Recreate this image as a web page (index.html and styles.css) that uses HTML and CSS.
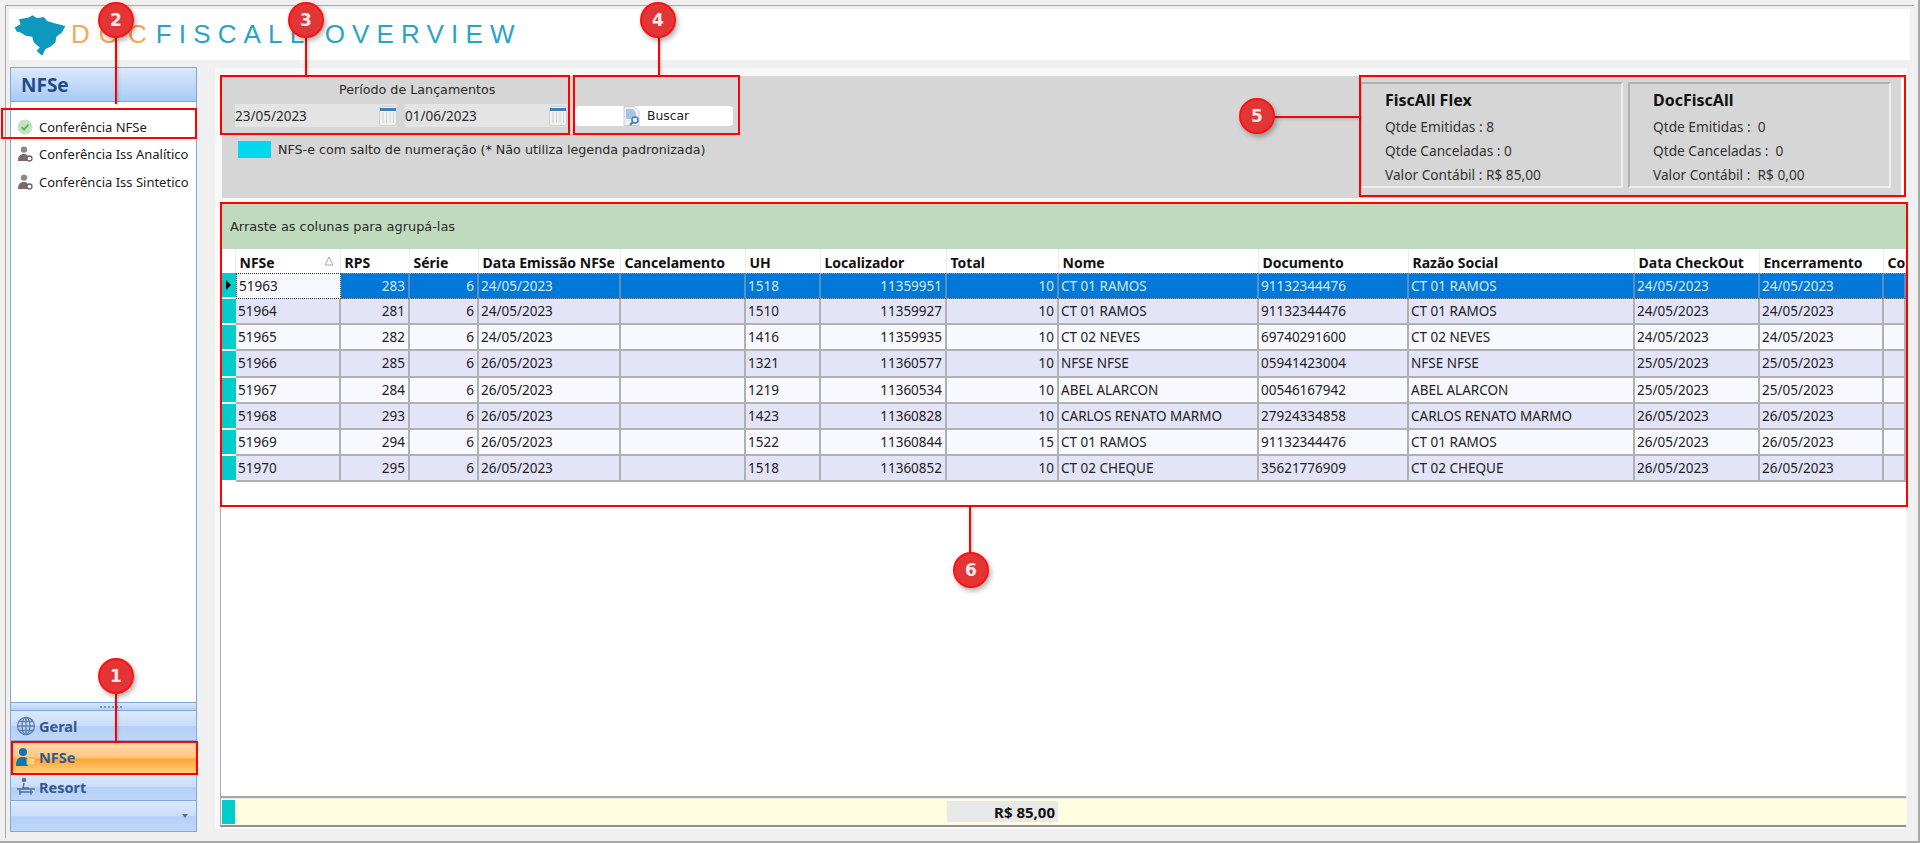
FILE: index.html
```html
<!DOCTYPE html>
<html lang="pt-BR">
<head>
<meta charset="utf-8">
<title>DocFiscall Overview</title>
<link rel="stylesheet" href="styles.css">
</head>
<body>
<div class="app">
  <div class="win">
    <header class="head">
      <svg class="brazil" viewBox="40 40 157 125"><path d="M42 80 60 70 55 55 85 50 95 43 110 52 130 48 140 60 165 68 195 75 185 95 168 108 165 125 150 138 135 145 125 165 108 150 118 140 100 125 95 108 75 105 60 95 48 92Z"/></svg>
      <div class="brand"><span class="brand-a">DOC</span>FISCALL OVERVIEW</div>
    </header>
    <div class="body">
      <aside class="side">
        <div class="side-title">NFSe</div>
        <ul class="side-list">
          <li class="side-item">
            <svg class="ico" viewBox="0 0 16 16"><circle cx="8" cy="8" r="7.5" fill="#c4e3c4"/><path d="M4.5 8.2 7 10.6 11.5 5.6" fill="none" stroke="#4caf50" stroke-width="1.6"/></svg>
            Conferência NFSe</li>
          <li class="side-item">
            <svg class="ico" viewBox="0 0 16 16"><circle cx="7" cy="3.6" r="3.2" fill="#8a8a8a"/><path d="M1 15c0-5 2-7 6-7 1.500 0 3 .5 3.500 1.500V15Z" fill="#6e6e6e"/><path d="M6.500 10h1.500v5H6.500Z" fill="#c9504a"/><circle cx="12.500" cy="12.500" r="2.500" fill="#fff" stroke="#666" stroke-width="1.300"/></svg>
            Conferência Iss Analítico</li>
          <li class="side-item">
            <svg class="ico" viewBox="0 0 16 16"><circle cx="7" cy="3.6" r="3.2" fill="#8a8a8a"/><path d="M1 15c0-5 2-7 6-7 1.500 0 3 .5 3.500 1.500V15Z" fill="#6e6e6e"/><path d="M6.500 10h1.500v5H6.500Z" fill="#c9504a"/><circle cx="12.500" cy="12.500" r="2.500" fill="#fff" stroke="#666" stroke-width="1.300"/></svg>
            Conferência Iss Sintetico</li>
        </ul>
        <div class="grip"><span class="grip-dots"></span></div>
        <div class="nav nav-geral">
          <svg class="nav-ico" viewBox="0 0 20 20" fill="none" stroke="#5f7fae" stroke-width="1.300"><circle cx="10" cy="10" r="8.500"/><ellipse cx="10" cy="10" rx="4" ry="8.500"/><path d="M1.500 10h17M3 5.500h14M3 14.500h14M10 1.500v17"/></svg>
          Geral</div>
        <div class="nav nav-nfse">
          <svg class="nav-ico" viewBox="0 0 20 20"><circle cx="7" cy="5" r="4" fill="#1374b8"/><path d="M0 18c0-6 3-8 7-8 3 0 5 1 5 3v6H0Z" fill="#1374b8"/><rect x="11" y="11" width="8" height="7" rx="1" fill="#fbd27c" stroke="#f2ac45"/></svg>
          NFSe</div>
        <div class="nav nav-resort">
          <svg class="nav-ico" viewBox="0 0 20 20" fill="none" stroke="#566f9b" stroke-width="1.400"><circle cx="8" cy="3" r="1.600" fill="#566f9b"/><path d="M8 6 7 11h6M1 12h18M4 12v6M15 12v6M3 15h14"/></svg>
          Resort</div>
        <div class="side-foot"><span class="caret"></span></div>
      </aside>
      <main class="main">
        <section class="panel">
          <div class="filters">
            <div class="period-title">Período de Lançamentos</div>
            <div class="period-row">
              <div class="date">23/05/2023
                <svg class="cal" viewBox="0 0 18 20"><rect x=".5" y=".5" width="17" height="19" rx="2" fill="#f2f2f2" stroke="#cfcfcf"/><rect x="1" y="2" width="16" height="3" fill="#3f7fb8"/><path d="M4 6v11M7.500 6v11M11 6v11M14.500 6v11" stroke="#d0d0d0"/></svg>
              </div>
              <div class="date">01/06/2023
                <svg class="cal" viewBox="0 0 18 20"><rect x=".5" y=".5" width="17" height="19" rx="2" fill="#f2f2f2" stroke="#cfcfcf"/><rect x="1" y="2" width="16" height="3" fill="#3f7fb8"/><path d="M4 6v11M7.500 6v11M11 6v11M14.500 6v11" stroke="#d0d0d0"/></svg>
              </div>
              <button class="btn" type="button">
                <svg class="btn-ico" viewBox="0 0 18 20"><path d="M1 .5h10l5 5v14H1Z" fill="#eef1f6" stroke="#c8ccd4"/><path d="M3 3h7l3 4v6H3Z" fill="#a9c4e6"/><circle cx="12" cy="14" r="3" fill="#fff" stroke="#2f7fc0" stroke-width="1.500"/><path d="M10 16 7 19" stroke="#2f7fc0" stroke-width="2"/></svg>
                Buscar</button>
            </div>
            <div class="legend"><span class="swatch"></span>NFS-e com salto de numeração (* Não utiliza legenda padronizada)</div>
          </div>
          <div class="stats">
            <div class="stat">
              <h2 class="stat-title">FiscAll Flex</h2>
              <p class="stat-row">Qtde Emitidas : 8</p>
              <p class="stat-row">Qtde Canceladas : 0</p>
              <p class="stat-row">Valor Contábil : R$ 85,00</p>
            </div>
            <div class="stat">
              <h2 class="stat-title">DocFiscAll</h2>
              <p class="stat-row">Qtde Emitidas :&nbsp; 0</p>
              <p class="stat-row">Qtde Canceladas :&nbsp; 0</p>
              <p class="stat-row">Valor Contábil :&nbsp; R$ 0,00</p>
            </div>
          </div>
        </section>
        <section class="grid">
          <div class="group-bar">Arraste as colunas para agrupá-las</div>
          <div class="grid-scroll">
            <table class="tbl">
              <colgroup>
                <col class="c-ind"><col class="c-nfse"><col class="c-rps"><col class="c-serie"><col class="c-emis"><col class="c-canc"><col class="c-uh"><col class="c-loc"><col class="c-total"><col class="c-nome"><col class="c-doc"><col class="c-razao"><col class="c-out"><col class="c-enc"><col class="c-co">
              </colgroup>
              <thead>
                <tr><th class="th-blank"></th><th>NFSe<svg class="sort" viewBox="0 0 10 10"><path d="M5 1 9 9H1Z" fill="none" stroke="#a8a8a8"/></svg></th><th>RPS</th><th>Série</th><th>Data Emissão NFSe</th><th>Cancelamento</th><th>UH</th><th>Localizador</th><th>Total</th><th>Nome</th><th>Documento</th><th>Razão Social</th><th>Data CheckOut</th><th>Encerramento</th><th>Co</th></tr>
              </thead>
              <tbody>
                <tr class="sel"><td class="ind"><span class="arrow"></span></td><td class="focus">51963</td><td class="r">283</td><td class="r">6</td><td>24/05/2023</td><td></td><td>1518</td><td class="r">11359951</td><td class="r">10</td><td>CT 01 RAMOS</td><td>91132344476</td><td>CT 01 RAMOS</td><td>24/05/2023</td><td>24/05/2023</td><td></td></tr>
                <tr class="even"><td class="ind"></td><td>51964</td><td class="r">281</td><td class="r">6</td><td>24/05/2023</td><td></td><td>1510</td><td class="r">11359927</td><td class="r">10</td><td>CT 01 RAMOS</td><td>91132344476</td><td>CT 01 RAMOS</td><td>24/05/2023</td><td>24/05/2023</td><td></td></tr>
                <tr><td class="ind"></td><td>51965</td><td class="r">282</td><td class="r">6</td><td>24/05/2023</td><td></td><td>1416</td><td class="r">11359935</td><td class="r">10</td><td>CT 02 NEVES</td><td>69740291600</td><td>CT 02 NEVES</td><td>24/05/2023</td><td>24/05/2023</td><td></td></tr>
                <tr class="even"><td class="ind"></td><td>51966</td><td class="r">285</td><td class="r">6</td><td>26/05/2023</td><td></td><td>1321</td><td class="r">11360577</td><td class="r">10</td><td>NFSE NFSE</td><td>05941423004</td><td>NFSE NFSE</td><td>25/05/2023</td><td>25/05/2023</td><td></td></tr>
                <tr><td class="ind"></td><td>51967</td><td class="r">284</td><td class="r">6</td><td>26/05/2023</td><td></td><td>1219</td><td class="r">11360534</td><td class="r">10</td><td>ABEL ALARCON</td><td>00546167942</td><td>ABEL ALARCON</td><td>25/05/2023</td><td>25/05/2023</td><td></td></tr>
                <tr class="even"><td class="ind"></td><td>51968</td><td class="r">293</td><td class="r">6</td><td>26/05/2023</td><td></td><td>1423</td><td class="r">11360828</td><td class="r">10</td><td>CARLOS RENATO MARMO</td><td>27924334858</td><td>CARLOS RENATO MARMO</td><td>26/05/2023</td><td>26/05/2023</td><td></td></tr>
                <tr><td class="ind"></td><td>51969</td><td class="r">294</td><td class="r">6</td><td>26/05/2023</td><td></td><td>1522</td><td class="r">11360844</td><td class="r">15</td><td>CT 01 RAMOS</td><td>91132344476</td><td>CT 01 RAMOS</td><td>26/05/2023</td><td>26/05/2023</td><td></td></tr>
                <tr class="even"><td class="ind"></td><td>51970</td><td class="r">295</td><td class="r">6</td><td>26/05/2023</td><td></td><td>1518</td><td class="r">11360852</td><td class="r">10</td><td>CT 02 CHEQUE</td><td>35621776909</td><td>CT 02 CHEQUE</td><td>26/05/2023</td><td>26/05/2023</td><td></td></tr>
              </tbody>
            </table>
          </div>
          <div class="grid-foot">
            <span class="foot-ind"></span>
            <span class="foot-fill"></span>
            <span class="foot-total">R$ 85,00</span>
          </div>
        </section>
      </main>
    </div>
  </div>

  <div class="box box-1"></div>
  <div class="box box-2"></div>
  <div class="box box-3"></div>
  <div class="box box-4"></div>
  <div class="box box-5"></div>
  <div class="box box-6"></div>

  <div class="line line-1"></div>
  <div class="line line-2"></div>
  <div class="line line-3"></div>
  <div class="line line-4"></div>
  <div class="line line-5"></div>
  <div class="line line-6"></div>

  <div class="pin pin-1">1</div>
  <div class="pin pin-2">2</div>
  <div class="pin pin-3">3</div>
  <div class="pin pin-4">4</div>
  <div class="pin pin-5">5</div>
  <div class="pin pin-6">6</div>
</div>
</body>
</html>
```
FILE: styles.css
```css
* { box-sizing: border-box; }
html, body { margin: 0; height: 843px; overflow: hidden; }
body { background: #f0f0f0; font-family: "Noto Sans", sans-serif; color: #222; }

.app {
  position: relative;
  width: 1920px;
  height: 843px;
  padding: 5px 2px 3px 5px;
  background: #f0f0f0;
  border-right: 2px solid #a8a8a8;
  border-bottom: 2px solid #a8a8a8;
}
.win {
  height: 100%;
  width: 1909px;
  padding: 3px 4px 0 3px;
  border-top: 1px solid #a9a9a9;
  border-left: 1px solid #a9a9a9;
}

.head {
  height: 51px;
  background: #fff;
  display: flex;
  align-items: center;
  padding-left: 5px;
}
.brazil { width: 52px; height: 42px; fill: #0f98bd; flex: none; }
.brand {
  margin-left: 5px;
  font: 26px "Liberation Sans", sans-serif;
  letter-spacing: 7.150px;
  color: #2ba3c6;
  white-space: nowrap;
}
.brand-a { color: #f4a855; letter-spacing: 9px; }

.body { display: flex; margin-top: 7px; height: 765px; }

/* Sidebar */
.side {
  width: 187px;
  margin-left: 1px;
  flex: none;
  display: flex;
  flex-direction: column;
  background: #fff;
  border: 1px solid #7fa8dc;
}
.side-title {
  height: 34px;
  flex: none;
  display: flex;
  align-items: center;
  padding-left: 10px;
  font-size: 19px;
  font-weight: 700;
  color: #1f4e8c;
  background: linear-gradient(#dbe9fc, #a8caf5);
  border-bottom: 1px solid #7fa8dc;
}
.side-list { list-style: none; margin: 0; padding: 11px 0 0; flex: 1; }
.side-item {
  display: flex;
  align-items: center;
  gap: 6px;
  height: 27.500px;
  padding-left: 6px;
  font-size: 13px;
  color: #1c1c1c;
}
.ico { width: 16px; height: 16px; flex: none; }
.grip {
  height: 9px;
  flex: none;
  display: flex;
  justify-content: center;
  align-items: center;
  background: linear-gradient(#d8e7fb, #b4d0f6);
  border-top: 1px solid #7fa8dc;
  border-bottom: 1px solid #7fa8dc;
}
.grip-dots { width: 22px; height: 2px; margin-left: 14px; background: repeating-linear-gradient(90deg, #7f97b8 0 2px, transparent 2px 4px); }
.nav {
  flex: none;
  display: flex;
  align-items: center;
  gap: 3px;
  padding-left: 5px;
  font-size: 14.500px;
  font-weight: 700;
  color: #34588f;
  background: linear-gradient(#dbe9fc 0, #c9ddf9 50%, #b4d0f6 52%, #bfd7f8 100%);
  border-bottom: 1px solid #7fa8dc;
}
.nav-ico { width: 20px; height: 20px; flex: none; }
.nav-geral { height: 30px; }
.nav-nfse { height: 33px; background: linear-gradient(#fddcae 0, #ffc884 50%, #ffa633 58%, #ffd07c 100%); }
.nav-resort { height: 27px; }
.side-foot {
  height: 30px;
  flex: none;
  display: flex;
  justify-content: flex-end;
  align-items: center;
  padding-right: 8px;
  background: linear-gradient(#dbe9fc 0, #c9ddf9 50%, #b4d0f6 52%, #bfd7f8 100%);
}
.caret { width: 0; height: 0; border: 3.500px solid transparent; border-top: 4px solid #5b6f8f; border-bottom: 0; }

/* Main */
.main {
  width: 1692px;
  margin-left: 18px;
  margin-top: 1px;
  height: 761px;
  background: #f8f8f8;
  padding: 8px 1px 2px 5px;
  display: flex;
  flex-direction: column;
}
.panel {
  height: 122px;
  margin: 0 5px 0 2px;
  flex: none;
  background: #d6d6d6;
  display: flex;
  justify-content: space-between;
  padding: 6px 10px 0 13px;
}
.filters { font-family: "DejaVu Sans", sans-serif; font-size: 12.700px; color: #2a2a2a; }
.period-title { height: 22px; line-height: 16px; padding-left: 104px; }
.period-row { display: flex; gap: 8px; align-items: center; }
.date {
  width: 162px;
  height: 23px;
  display: flex;
  justify-content: space-between;
  align-items: center;
  background: #e4e4e4;
  font-family: "Noto Sans", sans-serif;
  font-size: 13.500px;
}
.cal { width: 18px; height: 20px; flex: none; }
.btn {
  width: 158px;
  height: 20px;
  padding: 0 0 0 48px;
  margin-top: 1px;
  border: 0;
  border-radius: 4px;
  background: #fff;
  display: flex;
  align-items: center;
  gap: 6px;
  font-family: "DejaVu Sans", sans-serif;
  font-size: 12.300px;
  color: #222;
}
.btn-ico { width: 18px; height: 20px; flex: none; }
.legend { display: flex; align-items: center; gap: 7px; margin-top: 14px; padding-left: 3px; height: 17px; white-space: nowrap; }
.swatch { width: 33px; height: 17px; background: #00d8f0; flex: none; }

.stats { display: flex; gap: 5px; }
.stat {
  width: 263px;
  height: 106px;
  padding: 7px 0 0 23px;
  border: 2px solid;
  border-color: #b0b0b0 #eeeeee #eeeeee #b0b0b0;
}
.stat-title { margin: 0 0 6px; font-size: 16px; font-weight: 700; line-height: 18px; color: #111; }
.stat-row { margin: 0; height: 24px; line-height: 24px; font-size: 13.700px; color: #333; }

/* Grid */
.grid {
  flex: 1;
  margin-top: 5px;
  background: #fff;
  display: flex;
  flex-direction: column;
  border-left: 1px solid #a8a8c8;
  min-height: 0;
}
.group-bar {
  height: 46px;
  flex: none;
  padding-left: 9px;
  line-height: 48px;
  background: #c0dabe;
  font-family: "DejaVu Sans", sans-serif;
  font-size: 12.900px;
  color: #2b2b2b;
}
.grid-scroll { flex: 1; overflow: hidden; padding-left: 1px; min-height: 0; }
.tbl {
  table-layout: fixed;
  width: 1684px;
  border-collapse: separate;
  border-spacing: 0;
  font-size: 13.500px;
  color: #222;
  white-space: nowrap;
}
.c-ind { width: 14px; } .c-nfse { width: 105px; } .c-rps { width: 69px; } .c-serie { width: 69px; }
.c-emis { width: 142px; } .c-canc { width: 125px; } .c-uh { width: 75px; } .c-loc { width: 126px; }
.c-total { width: 112px; } .c-nome { width: 200px; } .c-doc { width: 150px; } .c-razao { width: 226px; }
.c-out { width: 125px; } .c-enc { width: 124px; } .c-co { width: 22px; }
.tbl th {
  height: 24px;
  padding: 2px 3px 0 3.500px;
  text-align: left;
  font-size: 14px;
  font-weight: 700;
  color: #111;
  background: #fff;
  border-right: 1px solid #ececec;
  overflow: hidden;
  position: relative;
}
.sort { position: absolute; right: 6px; top: 7px; width: 10px; height: 10px; }
.tbl td {
  height: 26.125px;
  padding: 0 3px 0 2px;
  background: #f8f8ff;
  border-right: 2px solid #b0b0b0;
  border-bottom: 2px solid #b0b0b0;
  overflow: hidden;
}
.tbl .even td { background: #e4e4f8; }
.tbl td.r { text-align: right; }
.tbl td.ind { background: #00cccc; border-right: 0; border-bottom: 2px solid #fff; padding: 0 0 0 4px; }
.tbl .even td.ind { background: #00cccc; }
.tbl .sel td { background: #0078d7; color: #d4e8fb; border-color: #c08a50 #5a8fc0; border-bottom: 1px dotted #c08a50; border-top: 1px dotted #c08a50; }
.tbl .sel td.focus { background: #f8f8ff; color: #222; border: 1px dotted #333; }
.tbl .sel td.ind { background: #00cccc; border: 0; border-bottom: 2px solid #fff; }
.arrow { display: block; width: 0; height: 0; border-left: 5px solid #000; border-top: 5px solid transparent; border-bottom: 5px solid transparent; }

.grid-foot {
  height: 31px;
  flex: none;
  display: flex;
  align-items: stretch;
  padding: 2px 0 1px;
  background: #ffffe0;
  border-top: 2px solid #a8a8a8;
  border-bottom: 2px solid #909090;
  box-shadow: inset 0 1px 0 #e8e8e8;
}
.foot-ind { width: 13px; margin-left: 1px; background: #00cccc; flex: none; }
.foot-fill { width: 712px; flex: none; }
.foot-total {
  width: 111px;
  margin: 1px 0 2px;
  padding-right: 3px;
  flex: none;
  display: flex;
  align-items: center;
  justify-content: flex-end;
  background: #e8e8e8;
  font-size: 15px;
  font-weight: 700;
  color: #111;
}

/* Annotations laid over the screenshot */
.box { position: absolute; border: 2px solid #f00; pointer-events: none; }
.box-1 { left: 11px; top: 741px; width: 187px; height: 34px; }
.box-2 { left: 1px; top: 108px; width: 196px; height: 31px; }
.box-3 { left: 220px; top: 75px; width: 350px; height: 60px; }
.box-4 { left: 573px; top: 75px; width: 167px; height: 60px; }
.box-5 { left: 1359px; top: 75px; width: 547px; height: 122px; }
.box-6 { left: 220px; top: 202px; width: 1688px; height: 305px; }

.line { position: absolute; background: #f00; box-shadow: 1px 1px 3px rgba(0,0,0,.25); }
.line-1 { left: 115px; top: 690px; width: 2px; height: 53px; }
.line-2 { left: 115px; top: 36px; width: 2px; height: 68px; }
.line-3 { left: 305px; top: 36px; width: 2px; height: 41px; }
.line-4 { left: 658px; top: 36px; width: 2px; height: 40px; }
.line-5 { left: 1272px; top: 116px; width: 88px; height: 2px; }
.line-6 { left: 969px; top: 507px; width: 2px; height: 48px; }

.pin {
  position: absolute;
  width: 36px;
  height: 36px;
  border-radius: 50%;
  background: #e23636;
  border: 2px solid #f11;
  box-shadow: 2px 3px 5px rgba(0,0,0,.3);
  display: flex;
  align-items: center;
  justify-content: center;
  font: 700 17px "DejaVu Sans", sans-serif;
  color: #fbeaea;
}
.pin-1 { left: 98px; top: 658px; }
.pin-2 { left: 98px; top: 2px; }
.pin-3 { left: 288px; top: 2px; }
.pin-4 { left: 640px; top: 2px; }
.pin-5 { left: 1239px; top: 98px; }
.pin-6 { left: 953px; top: 552px; }
```
